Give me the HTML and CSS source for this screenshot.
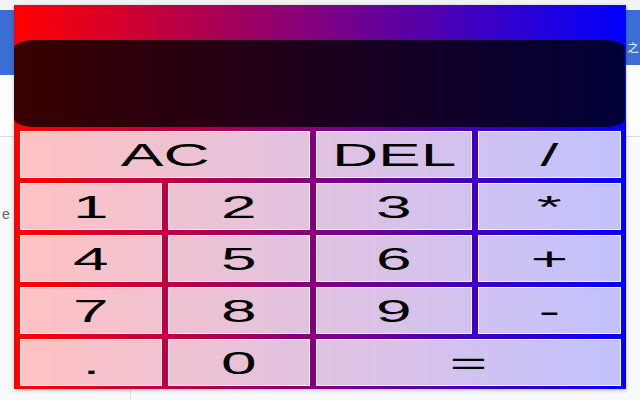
FILE: index.html
```html
<!DOCTYPE html>
<html lang="en">
<head>
<meta charset="utf-8">
<title>Calculator</title>
<link rel="stylesheet" href="styles.css">
</head>
<body>
<div class="page">
  <div class="page-top"></div>
  <div class="page-head">
    <div class="head-blue head-blue-left"></div>
    <div class="head-blue head-blue-right"><span class="head-text">之</span></div>
  </div>
  <div class="page-body">
    <span class="frag">e</span>
  </div>
  <div class="page-rule"></div>

  <div class="calc">
    <div class="display"></div>
    <div class="keys">
      <button class="key span2"><span>AC</span></button>
      <button class="key"><span>DEL</span></button>
      <button class="key"><span>/</span></button>
      <button class="key"><span>1</span></button>
      <button class="key"><span>2</span></button>
      <button class="key"><span>3</span></button>
      <button class="key"><span>*</span></button>
      <button class="key"><span>4</span></button>
      <button class="key"><span>5</span></button>
      <button class="key"><span>6</span></button>
      <button class="key"><span>+</span></button>
      <button class="key"><span>7</span></button>
      <button class="key"><span>8</span></button>
      <button class="key"><span>9</span></button>
      <button class="key"><span>-</span></button>
      <button class="key"><span>.</span></button>
      <button class="key"><span>0</span></button>
      <button class="key span2"><span>=</span></button>
    </div>
  </div>
</div>
</body>
</html>
```

FILE: styles.css
```css
html, body {
  margin: 0;
  padding: 0;
}
body {
  width: 640px;
  height: 400px;
  overflow: hidden;
  background: #f8f9fa;
  font-family: "Liberation Sans", Arial, sans-serif;
}
.page {
  position: relative;
  width: 640px;
  height: 400px;
}
.page-top {
  height: 10px;
  background: #f1f3f4;
}
.page-head {
  display: flex;
  justify-content: space-between;
  background: #ffffff;
  height: 126px;
  border-bottom: 1px solid #dadce0;
}
.head-blue {
  background: #3b6fd6;
  width: 14px;
}
.head-blue-left { height: 65px; }
.head-blue-right {
  height: 55px;
  color: #ffffff;
  font-family: "Noto Sans CJK SC", sans-serif;
  font-size: 11px;
  line-height: 12px;
  display: flex;
  align-items: center;
  justify-content: center;
}
.head-text {
  margin-top: 18px;
}
.page-body {
  height: 120px;
  padding-top: 70px;
  box-sizing: border-box;
}
.frag {
  display: block;
  width: 14px;
  color: #5f6368;
  font-size: 14px;
  line-height: 15px;
  text-indent: 2px;
}
.page-rule {
  position: absolute;
  left: 130px;
  top: 389px;
  width: 1px;
  height: 11px;
  background: #e0e0e0;
}

/* popup calculator (sits over the page) */
.calc {
  position: absolute;
  left: 14px;
  top: 5px;
  width: 612px;
  height: 384px;
  box-sizing: border-box;
  padding-top: 35px;
  background: linear-gradient(to right, #ff0000, #0000ff);
  box-shadow: 0 1px 4px rgba(0, 0, 0, 0.25);
  display: flex;
  flex-direction: column;
}
.display {
  height: 87px;
  margin-right: 1px;
  background: rgba(0, 0, 0, 0.78);
  border-radius: 22px / 8px;
}
.keys {
  margin: 4px 5px 3px 6px;
  display: grid;
  grid-template-columns: 142px 142px 156px 143px;
  grid-auto-rows: 47px;
  column-gap: 6px;
  row-gap: 5px;
}
.key {
  margin: 0;
  padding: 0;
  border: 1px solid rgba(255, 255, 255, 0.85);
  background: rgba(255, 255, 255, 0.76);
  color: #000000;
  font-family: "Liberation Sans", Arial, sans-serif;
  font-size: 32px;
  line-height: 1;
  display: flex;
  align-items: center;
  justify-content: center;
  overflow: hidden;
}
.key span {
  display: inline-block;
  transform: scaleX(2);
}
.span2 {
  grid-column: span 2;
}
```
